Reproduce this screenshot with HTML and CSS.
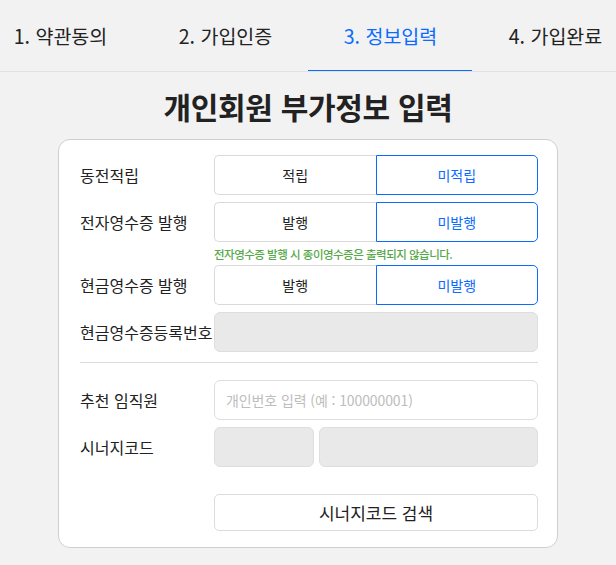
FILE: index.html
```html
<!DOCTYPE html>
<html lang="ko">
<head>
<meta charset="utf-8">
<link rel="stylesheet" href="styles.css">
</head>
<body>
<nav class="tabs">
  <div class="tab-track">
    <div class="tab">1. 약관동의</div>
    <div class="tab">2. 가입인증</div>
    <div class="tab active">3. 정보입력</div>
    <div class="tab">4. 가입완료</div>
  </div>
</nav>
<h1 class="title">개인회원 부가정보 입력</h1>
<section class="card">
  <div class="row">
    <div class="label">동전적립</div>
    <div class="toggle">
      <div class="opt">적립</div>
      <div class="opt on">미적립</div>
    </div>
  </div>
  <div class="row">
    <div class="label">전자영수증 발행</div>
    <div class="toggle">
      <div class="opt">발행</div>
      <div class="opt on">미발행</div>
    </div>
  </div>
  <div class="note">전자영수증 발행 시 종이영수증은 출력되지 않습니다.</div>
  <div class="row">
    <div class="label">현금영수증 발행</div>
    <div class="toggle">
      <div class="opt">발행</div>
      <div class="opt on">미발행</div>
    </div>
  </div>
  <div class="row">
    <div class="label">현금영수증등록번호</div>
    <div class="field disabled"></div>
  </div>
  <hr class="divider">
  <div class="row">
    <div class="label">추천 임직원</div>
    <div class="field"><span class="ph">개인번호 입력 (예 : 100000001)</span></div>
  </div>
  <div class="row">
    <div class="label">시너지코드</div>
    <div class="pair">
      <div class="field disabled small"></div>
      <div class="field disabled"></div>
    </div>
  </div>
  <div class="row btn-row">
    <div class="label"></div>
    <button class="search">시너지코드 검색</button>
  </div>
</section>
</body>
</html>
```

FILE: styles.css
```css
* { box-sizing: border-box; }
html, body {
  margin: 0;
  background: #f2f2f2;
  font-family: "Noto Sans CJK KR", "Noto Sans", sans-serif;
  color: #222;
}
.tabs {
  height: 72px;
  border-bottom: 1px solid #e2e2e2;
  overflow: hidden;
}
.tab-track {
  display: flex;
  margin-left: -22px;
  height: 71px;
}
.tab {
  flex: 0 0 165px;
  display: flex;
  align-items: center;
  justify-content: center;
  font-size: 19.5px;
  color: #222;
  position: relative;
  padding-bottom: 1px;
}
.tab.active { color: #0a6cff; }
.tab.active::after {
  content: "";
  position: absolute;
  left: 0;
  right: 1px;
  bottom: -1px;
  height: 2px;
  background: #0a6cff;
}
.title {
  margin: 0;
  height: 67px;
  display: flex;
  align-items: center;
  justify-content: center;
  font-size: 30px;
  font-weight: 700;
  color: #222;
  letter-spacing: -0.3px;
}
.card {
  margin: 0 58px 0 58px;
  width: 500px;
  background: #fff;
  border: 1px solid #cfcfcf;
  border-radius: 12px;
  padding: 15px 19px 16px 21px;
  display: flex;
  flex-direction: column;
  gap: 7px;
}
.row {
  display: flex;
  align-items: center;
  height: 40px;
}
.label {
  flex: 0 0 134px;
  font-size: 16px;
  white-space: nowrap;
  color: #222;
}
.toggle {
  flex: 1;
  display: flex;
  height: 40px;
}
.opt {
  flex: 1;
  display: flex;
  align-items: center;
  justify-content: center;
  font-size: 14px;
  color: #222;
  border: 1px solid #d9d9d9;
}
.opt:first-child {
  border-radius: 5px 0 0 5px;
  border-right: none;
}
.opt.on {
  color: #0a6cff;
  border: 1px solid #0a6cff;
  border-radius: 0 5px 5px 0;
}
.note {
  margin: -3px 0 -4px 134px;
  font-size: 11.5px;
  font-weight: 500;
  letter-spacing: -0.5px;
  color: #57a84a;
  line-height: 16px;
}
.field {
  flex: 1;
  height: 40px;
  border: 1px solid #dedede;
  border-radius: 6px;
  background: #fff;
  display: flex;
  align-items: center;
  padding-left: 11px;
}
.field.disabled { background: #e9e9e9; }
.ph {
  font-size: 14px;
  color: #bdbdbd;
  letter-spacing: -0.1px;
}
.pair {
  flex: 1;
  display: flex;
  gap: 5px;
}
.field.small { flex: 0 0 100px; }
.divider {
  border: none;
  border-top: 1px solid #dcdcdc;
  margin: 3px 0 10px 0;
  width: 100%;
}
.btn-row { margin-top: 20px; height: 37px; }
.search {
  flex: 1;
  height: 37px;
  background: #fff;
  border: 1px solid #dcdcdc;
  border-radius: 5px;
  font-family: inherit;
  font-size: 17px;
  color: #222;
}
```
